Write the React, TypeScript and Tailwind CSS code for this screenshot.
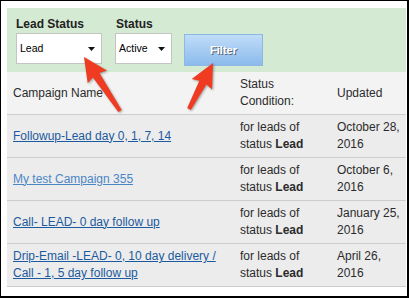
import React from 'react';

const font = "font-['Liberation_Sans',Arial,sans-serif]";

// skitch-style arrow: thin tail, wide head
const arrowPoints = (tx: number, ty: number, hx: number, hy: number) => {
  const headLen = 22;
  const headHalf = 11.5;
  const neckHalf = 4;
  const tailHalf = 2;
  const dx = hx - tx;
  const dy = hy - ty;
  const len = Math.sqrt(dx * dx + dy * dy);
  const ux = dx / len;
  const uy = dy / len;
  const px = -uy;
  const py = ux;
  const nx = hx - ux * headLen;
  const ny = hy - uy * headLen;
  const pts = [
    [tx + px * tailHalf, ty + py * tailHalf],
    [nx + px * neckHalf, ny + py * neckHalf],
    [nx + px * headHalf - ux * 2, ny + py * headHalf - uy * 2],
    [hx, hy],
    [nx - px * headHalf - ux * 2, ny - py * headHalf - uy * 2],
    [nx - px * neckHalf, ny - py * neckHalf],
    [tx - px * tailHalf, ty - py * tailHalf],
  ];
  return pts.map((p) => `${p[0].toFixed(1)},${p[1].toFixed(1)}`).join(' ');
};

const Caret = () => (
  <svg width="7" height="4" viewBox="0 0 7 4" className="shrink-0">
    <path d="M0 0 L7 0 L3.5 4 Z" fill="#111" />
  </svg>
);

const rows = [
  { name: 'Followup-Lead day 0, 1, 7, 14', date: 'October 28, 2016', visited: false },
  { name: 'My test Campaign 355', date: 'October 6, 2016', visited: true },
  { name: 'Call- LEAD- 0 day follow up', date: 'January 25, 2016', visited: false },
  { name: 'Drip-Email -LEAD- 0, 10 day delivery / Call - 1, 5 day follow up', date: 'April 26, 2016', visited: false },
];

export default function App() {
  return (
    <div className={`relative w-[409px] h-[298px] bg-white border-black border-t border-l border-r-2 border-b-2 pl-[6px] pt-[7px] overflow-hidden ${font}`}>
      <div className="w-[399px]">
        {/* filter bar */}
        <div className="h-[64px] bg-[#d5ead3] flex pl-[9px]">
          <div className="flex flex-col pt-[9px] w-[86px]">
            <label className="text-[12px] leading-[14px] font-bold text-[#222]">Lead Status</label>
            <div className="mt-[2px] h-[31px] bg-white border border-[#c4c4c4] flex items-center justify-between pl-[3px] pr-[6px]">
              <span className="text-[10.5px] text-black">Lead</span>
              <Caret />
            </div>
          </div>
          <div className="flex flex-col pt-[9px] w-[57px] ml-[13px]">
            <label className="text-[12px] leading-[14px] font-bold text-[#222] pl-[1px]">Status</label>
            <div className="mt-[2px] h-[31px] bg-white border border-[#c4c4c4] flex items-center justify-between pl-[3px] pr-[6px]">
              <span className="text-[10.5px] text-black">Active</span>
              <Caret />
            </div>
          </div>
          <button className="ml-[12px] mt-[26px] w-[79px] h-[32px] border border-[#8db8e6] bg-linear-to-b from-[#c0dcf8] to-[#8bbbec] text-white text-[11px] font-bold [text-shadow:1px_1px_0_#5a6470]">
            Filter
          </button>
        </div>

        {/* campaigns table */}
        <div className="text-[12px] text-[#2b2b2b]">
          <div className="grid grid-cols-[227px_96px_76px] h-[43px] bg-[#f3f3f3] border-b border-[#cdcdcd] items-center leading-[17px]">
            <div className="px-[6px]">Campaign Name</div>
            <div className="px-[6px]">Status Condition:</div>
            <div className="pl-[7px] pr-[5px]">Updated</div>
          </div>
          {rows.map((r) => (
            <div key={r.name} className="grid grid-cols-[227px_96px_76px] h-[43px] bg-[#ececec] border-b border-[#cdcdcd] items-center leading-[17px]">
              <div className="px-[6px]">
                <a href="#" className={`underline ${r.visited ? 'text-[#4a86c6]' : 'text-[#1b5a9e]'}`}>{r.name}</a>
              </div>
              <div className="px-[6px]">
                <div>for leads of</div>
                <div>status <b>Lead</b></div>
              </div>
              <div className="pl-[7px] pr-[5px]">{r.date}</div>
            </div>
          ))}
        </div>
      </div>

      {/* red callout arrows */}
      <svg className="absolute inset-0 pointer-events-none drop-shadow-[1px_1px_1px_rgba(0,0,0,0.35)]" width="409" height="298">
        <polygon points={arrowPoints(119, 110, 83, 56)} fill="#ef3b22" />
        <polygon points={arrowPoints(188, 108, 212, 62)} fill="#ef3b22" />
      </svg>
    </div>
  );
}
